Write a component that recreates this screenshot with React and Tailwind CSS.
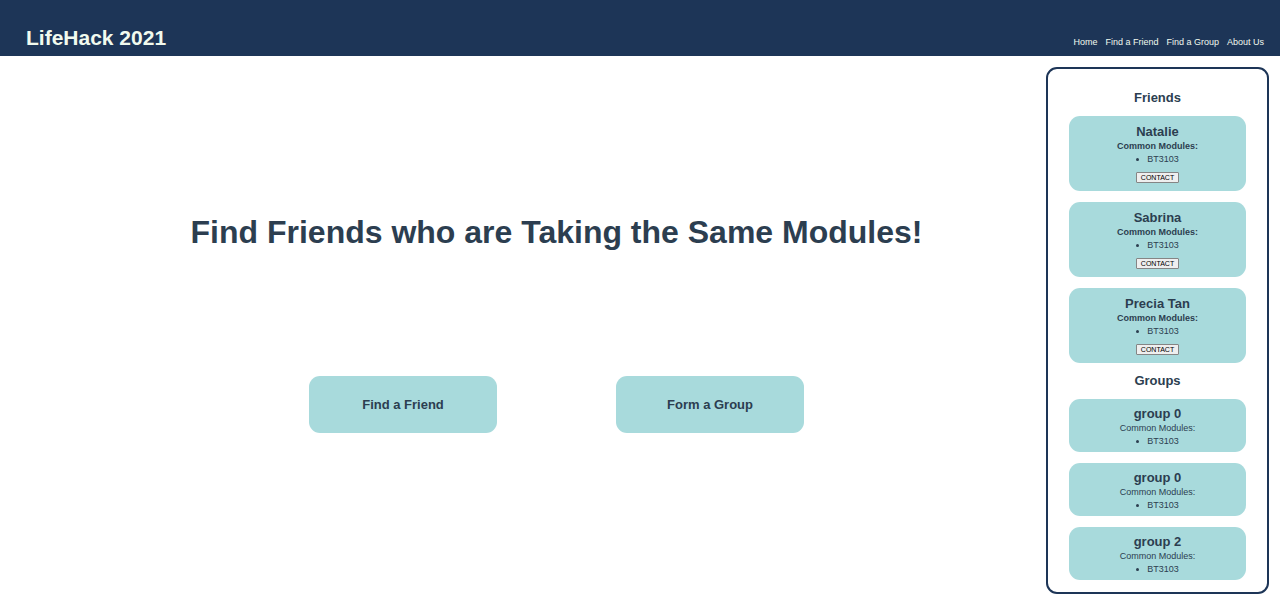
const navLinks = ["Home", "Find a Friend", "Find a Group", "About Us"];

const friends = [
  { name: "Natalie", modules: ["BT3103"] },
  { name: "Sabrina", modules: ["BT3103"] },
  { name: "Precia Tan", modules: ["BT3103"] },
];

const groups = [
  { id: 1, name: "group 0", modules: ["BT3103"] },
  { id: 2, name: "group 0", modules: ["BT3103"] },
  { id: 3, name: "group 2", modules: ["BT3103"] },
];

function ModuleList({ modules }) {
  return (
    <ul className="text-[9px] leading-[13px]">
      {modules.map((code) => (
        <li key={code} className="flex items-center justify-center gap-2">
          <span className="size-[3px] rounded-full bg-[#2c3e50]" />
          <span>{code}</span>
        </li>
      ))}
    </ul>
  );
}

function FriendCard({ name, modules }) {
  return (
    <article className="flex flex-col items-center rounded-[11px] bg-[#a8dadc] pt-[7px] pb-2">
      <h3 className="text-[13px] leading-[17px] font-bold">{name}</h3>
      <p className="text-[9px] leading-[13px] font-bold">Common Modules:</p>
      <ModuleList modules={modules} />
      <button
        type="button"
        className="mt-[6px] rounded-[1px] border border-[#858585] bg-[#efefef] px-1 text-[7px] leading-[9px] text-black"
      >
        CONTACT
      </button>
    </article>
  );
}

function GroupCard({ name, modules }) {
  return (
    <article className="flex flex-col items-center rounded-[11px] bg-[#a8dadc] pt-[6px] pb-1">
      <h3 className="text-[13px] leading-[17px] font-bold">{name}</h3>
      <p className="text-[9px] leading-[13px]">Common Modules:</p>
      <ModuleList modules={modules} />
    </article>
  );
}

function ActionButton({ children }) {
  return (
    <button
      type="button"
      className="w-[188px] rounded-[11px] bg-[#a8dadc] py-5 text-[13px] leading-[17px] font-bold"
    >
      {children}
    </button>
  );
}

export default function App() {
  return (
    <div className="min-h-screen bg-white font-['Liberation_Sans',Arial,sans-serif] text-[#2c3e50]">
      <header className="flex items-baseline justify-between bg-[#1d3557] pt-[25px] pr-4 pb-[5px] pl-[26px] text-[#f1faee]">
        <h1 className="text-[21px] leading-[26px] font-bold">LifeHack 2021</h1>
        <nav className="flex gap-2 text-[9px]">
          {navLinks.map((label) => (
            <a key={label} href="#">
              {label}
            </a>
          ))}
        </nav>
      </header>

      <div className="flex items-start pr-[11px]">
        <main className="flex flex-1 flex-col items-center pt-[156px] pl-[67px]">
          <h2 className="text-[32px] leading-10 font-bold">
            Find Friends who are Taking the Same Modules!
          </h2>
          <div className="mt-[124px] flex gap-[119px]">
            <ActionButton>Find a Friend</ActionButton>
            <ActionButton>Form a Group</ActionButton>
          </div>
        </main>

        <aside className="mt-[11px] w-[223px] rounded-[11px] border-2 border-[#1d3557] px-[21px] pt-[21px] pb-3">
          <section>
            <h2 className="text-center text-[13px] leading-4 font-bold">Friends</h2>
            <div className="mt-[10px] flex flex-col gap-[11px]">
              {friends.map((friend) => (
                <FriendCard key={friend.name} {...friend} />
              ))}
            </div>
          </section>
          <section className="mt-[10px]">
            <h2 className="text-center text-[13px] leading-4 font-bold">Groups</h2>
            <div className="mt-[10px] flex flex-col gap-[11px]">
              {groups.map((group) => (
                <GroupCard key={group.id} {...group} />
              ))}
            </div>
          </section>
        </aside>
      </div>
    </div>
  );
}
